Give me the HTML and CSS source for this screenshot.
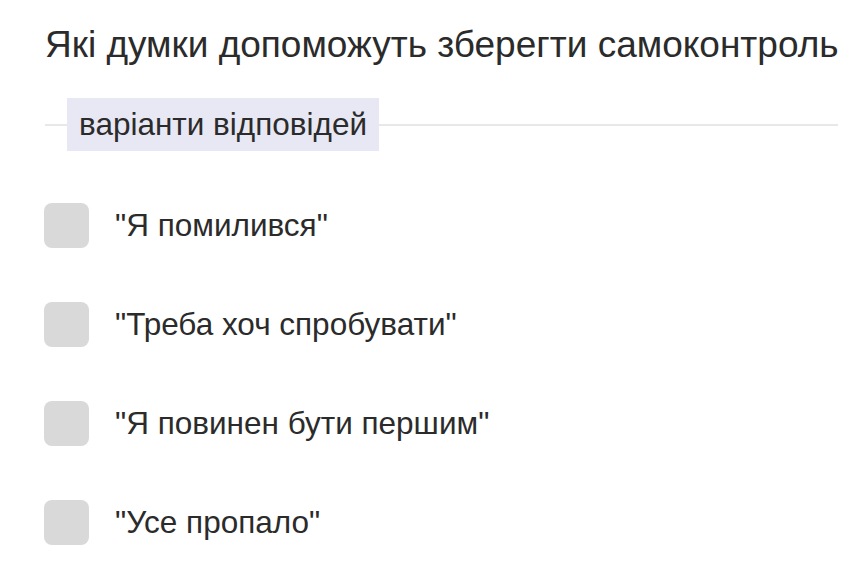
FILE: index.html
```html
<!DOCTYPE html>
<html lang="uk">
<head>
<meta charset="utf-8">
<link rel="stylesheet" href="styles.css">
</head>
<body>
<main class="quiz">
  <h1 class="question">Які думки допоможуть зберегти самоконтроль</h1>
  <div class="divider">
    <span class="divider-label">варіанти відповідей</span>
  </div>
  <ul class="options">
    <li class="option"><span class="box"></span><span class="text">"Я помилився"</span></li>
    <li class="option"><span class="box"></span><span class="text">"Треба хоч спробувати"</span></li>
    <li class="option"><span class="box"></span><span class="text">"Я повинен бути першим"</span></li>
    <li class="option"><span class="box"></span><span class="text">"Усе пропало"</span></li>
  </ul>
</main>
</body>
</html>
```
FILE: styles.css
```css
html, body {
  margin: 0;
  padding: 0;
  background: #ffffff;
}
body {
  font-family: "Liberation Sans", Arial, sans-serif;
  color: #2b2b2b;
}
.quiz {
  padding: 22px 22px 0 45px;
}
.question {
  margin: 0;
  font-size: 37px;
  font-weight: 400;
  line-height: 46px;
  white-space: nowrap;
}
.divider {
  display: flex;
  align-items: center;
  margin-top: 30px;
  height: 53px;
}
.divider::before,
.divider::after {
  content: "";
  height: 2px;
  background: #e8e8e8;
}
.divider::before {
  width: 22px;
}
.divider::after {
  flex: 1;
}
.divider-label {
  background: #e8e8f4;
  height: 53px;
  line-height: 53px;
  padding: 0 12px;
  font-size: 31.5px;
  color: #2b2b2b;
}
.options {
  list-style: none;
  margin: 52px 0 0 -1px;
  padding: 0;
  display: flex;
  flex-direction: column;
  gap: 54px;
}
.option {
  display: flex;
  align-items: center;
  gap: 26px;
  height: 45px;
}
.box {
  width: 45px;
  height: 45px;
  border-radius: 8px;
  background: #d9d9d9;
  flex: none;
}
.text {
  font-size: 31.5px;
  color: #2b2b2b;
}
```
